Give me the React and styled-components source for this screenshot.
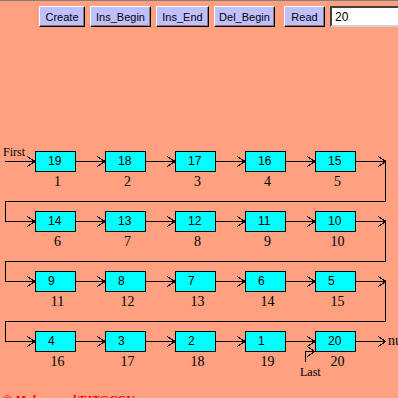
import React from "react";
import styled, { createGlobalStyle } from "styled-components";

const GlobalStyle = createGlobalStyle`
  html, body {
    margin: 0;
    padding: 0;
    background: #ffa080;
  }
`;

const rows = [
  [19, 18, 17, 16, 15],
  [14, 13, 12, 11, 10],
  [9, 8, 7, 6, 5],
  [4, 3, 2, 1, 20],
];

const buttons = [
  { label: "Create", width: 46 },
  { label: "Ins_Begin", width: 61 },
  { label: "Ins_End", width: 53 },
  { label: "Del_Begin", width: 61 },
  { label: "Read", width: 41, extra: 4 },
];

// diagram geometry (page coords)
const colX = [35, 105, 175, 245, 315];
const rowTop = [151, 211, 271, 331];
const boxW = 41;
const diagramTop = 141;

const Arrow = ({ tip, cy, dot = true }) => (
  <>
    <polyline
      points={`${tip - 6.5},${cy - 5} ${tip + 0.5},${cy} ${tip - 6.5},${cy + 5}`}
      fill="none"
      stroke="#000"
    />
    {dot && <rect x={tip - 1} y={cy - 1.5} width={2} height={3} fill="#000" />}
  </>
);

const Connectors = () => {
  const parts = [];
  rowTop.forEach((top, r) => {
    const cy = top + 10.5;
    // arrows between boxes
    for (let c = 0; c < 4; c++) {
      const from = colX[c] + boxW;
      const tip = colX[c + 1] - 1;
      parts.push(
        <g key={`a${r}${c}`}>
          <line x1={from} y1={cy} x2={tip + 1} y2={cy} stroke="#000" />
          <Arrow tip={tip} cy={cy} />
        </g>
      );
    }
    // arrow out of the last box
    const end = colX[4] + boxW;
    parts.push(
      <g key={`e${r}`}>
        <line x1={end} y1={cy} x2={386} y2={cy} stroke="#000" />
        <Arrow tip={385} cy={cy} dot={r < 3} />
      </g>
    );
    if (r < 3) {
      const low = cy + 40;
      const next = rowTop[r + 1] + 10.5;
      parts.push(
        <g key={`w${r}`}>
          <polyline
            points={`385.5,${cy} 385.5,${low} 5.5,${low} 5.5,${next} 35,${next}`}
            fill="none"
            stroke="#000"
          />
          <Arrow tip={34} cy={next} />
        </g>
      );
    }
  });
  return parts;
};

const DiagramSvg = () => (
  <Overlay width="398" height="257" shapeRendering="crispEdges">
    <g transform={`translate(0 ${-diagramTop})`}>
      <SvgLabel x="3" y="156">First</SvgLabel>
      <line x1="5" y1="161.5" x2="35" y2="161.5" stroke="#000" />
      <Arrow tip={34} cy={161.5} />
      <Connectors />
      <SvgLabel x="388" y="345" size={14}>null</SvgLabel>
      <polyline points="305.5,362 305.5,351.5 315,351.5" fill="none" stroke="#000" />
      <Arrow tip={314} cy={351.5} dot={false} />
      <SvgLabel x="300" y="376">Last</SvgLabel>
    </g>
  </Overlay>
);

const App = () => {
  let index = 0;
  return (
    <Screen>
      <GlobalStyle />
      <Toolbar>
        {buttons.map((b) => (
          <Button key={b.label} $w={b.width} $extra={b.extra}>
            {b.label}
          </Button>
        ))}
        <Field defaultValue="20" />
      </Toolbar>
      <Diagram>
        <DiagramSvg />
        {rows.map((row, r) => (
          <Row key={r}>
            {row.map((value) => {
              index += 1;
              return (
                <Node key={value}>
                  <Box>{value}</Box>
                  <Index>{index}</Index>
                </Node>
              );
            })}
          </Row>
        ))}
      </Diagram>
      <Credit>© Muhammad/EIT@CGU</Credit>
    </Screen>
  );
};

export default App;

const Screen = styled.div`
  width: 398px;
  height: 398px;
  overflow: hidden;
  background: #ffa080;
  border-top: 1px solid #808080;
  box-sizing: border-box;
`;

const Toolbar = styled.div`
  display: flex;
  align-items: flex-start;
  gap: 5px;
  padding: 5px 0 0 39px;
  height: 26px;
  box-sizing: border-box;
  white-space: nowrap;
`;

const Button = styled.button`
  flex: none;
  width: ${(p) => p.$w}px;
  height: 21px;
  margin-left: ${(p) => p.$extra || 0}px;
  padding: 0;
  background: #c0c0ff;
  border: 1px solid;
  border-color: #ffffff #000000 #000000 #ffffff;
  box-shadow: inset -1px -1px 0 #808080;
  font-family: "Liberation Sans", Arial, sans-serif;
  font-size: 11px;
  color: #000;
  line-height: 18px;
`;

const Field = styled.input`
  flex: none;
  width: 90px;
  height: 21px;
  box-sizing: border-box;
  margin: 0;
  padding: 0 0 0 3px;
  border: 2px solid;
  border-color: #404040 #d0d0d0 #d0d0d0 #404040;
  background: #fff;
  font-family: "Liberation Sans", Arial, sans-serif;
  font-size: 12px;
  color: #000;
  outline: none;
`;

const Diagram = styled.div`
  position: relative;
  margin-top: 114px;
  padding-top: 10px;
  display: flex;
  flex-direction: column;
`;

const Overlay = styled.svg`
  position: absolute;
  left: 0;
  top: 0;
  overflow: visible;
`;

const SvgLabel = styled.text.attrs((p) => ({ fontSize: p.size || 12 }))`
  font-family: "Liberation Serif", "Times New Roman", serif;
  fill: #000;
`;

const Row = styled.div`
  display: flex;
  gap: 29px;
  padding-left: 35px;
  height: 60px;
`;

const Node = styled.div`
  position: relative;
  width: ${boxW}px;
  display: flex;
  flex-direction: column;
`;

const Box = styled.div`
  height: 21px;
  box-sizing: border-box;
  border: 1px solid #000;
  background: #00ffff;
  padding-left: 12px;
  font-family: "Liberation Sans", Arial, sans-serif;
  font-size: 12px;
  line-height: 19px;
  color: #000;
`;

const Index = styled.div`
  margin-top: 2px;
  padding-left: 4px;
  text-align: center;
  font-family: "Liberation Serif", "Times New Roman", serif;
  font-size: 14px;
  line-height: 16px;
  color: #000;
`;

const Credit = styled.p`
  margin: 2px 0 0 3px;
  font-family: "Liberation Serif", "Times New Roman", serif;
  font-style: italic;
  font-weight: bold;
  font-size: 12px;
  line-height: 14px;
  color: #ff0000;
`;
